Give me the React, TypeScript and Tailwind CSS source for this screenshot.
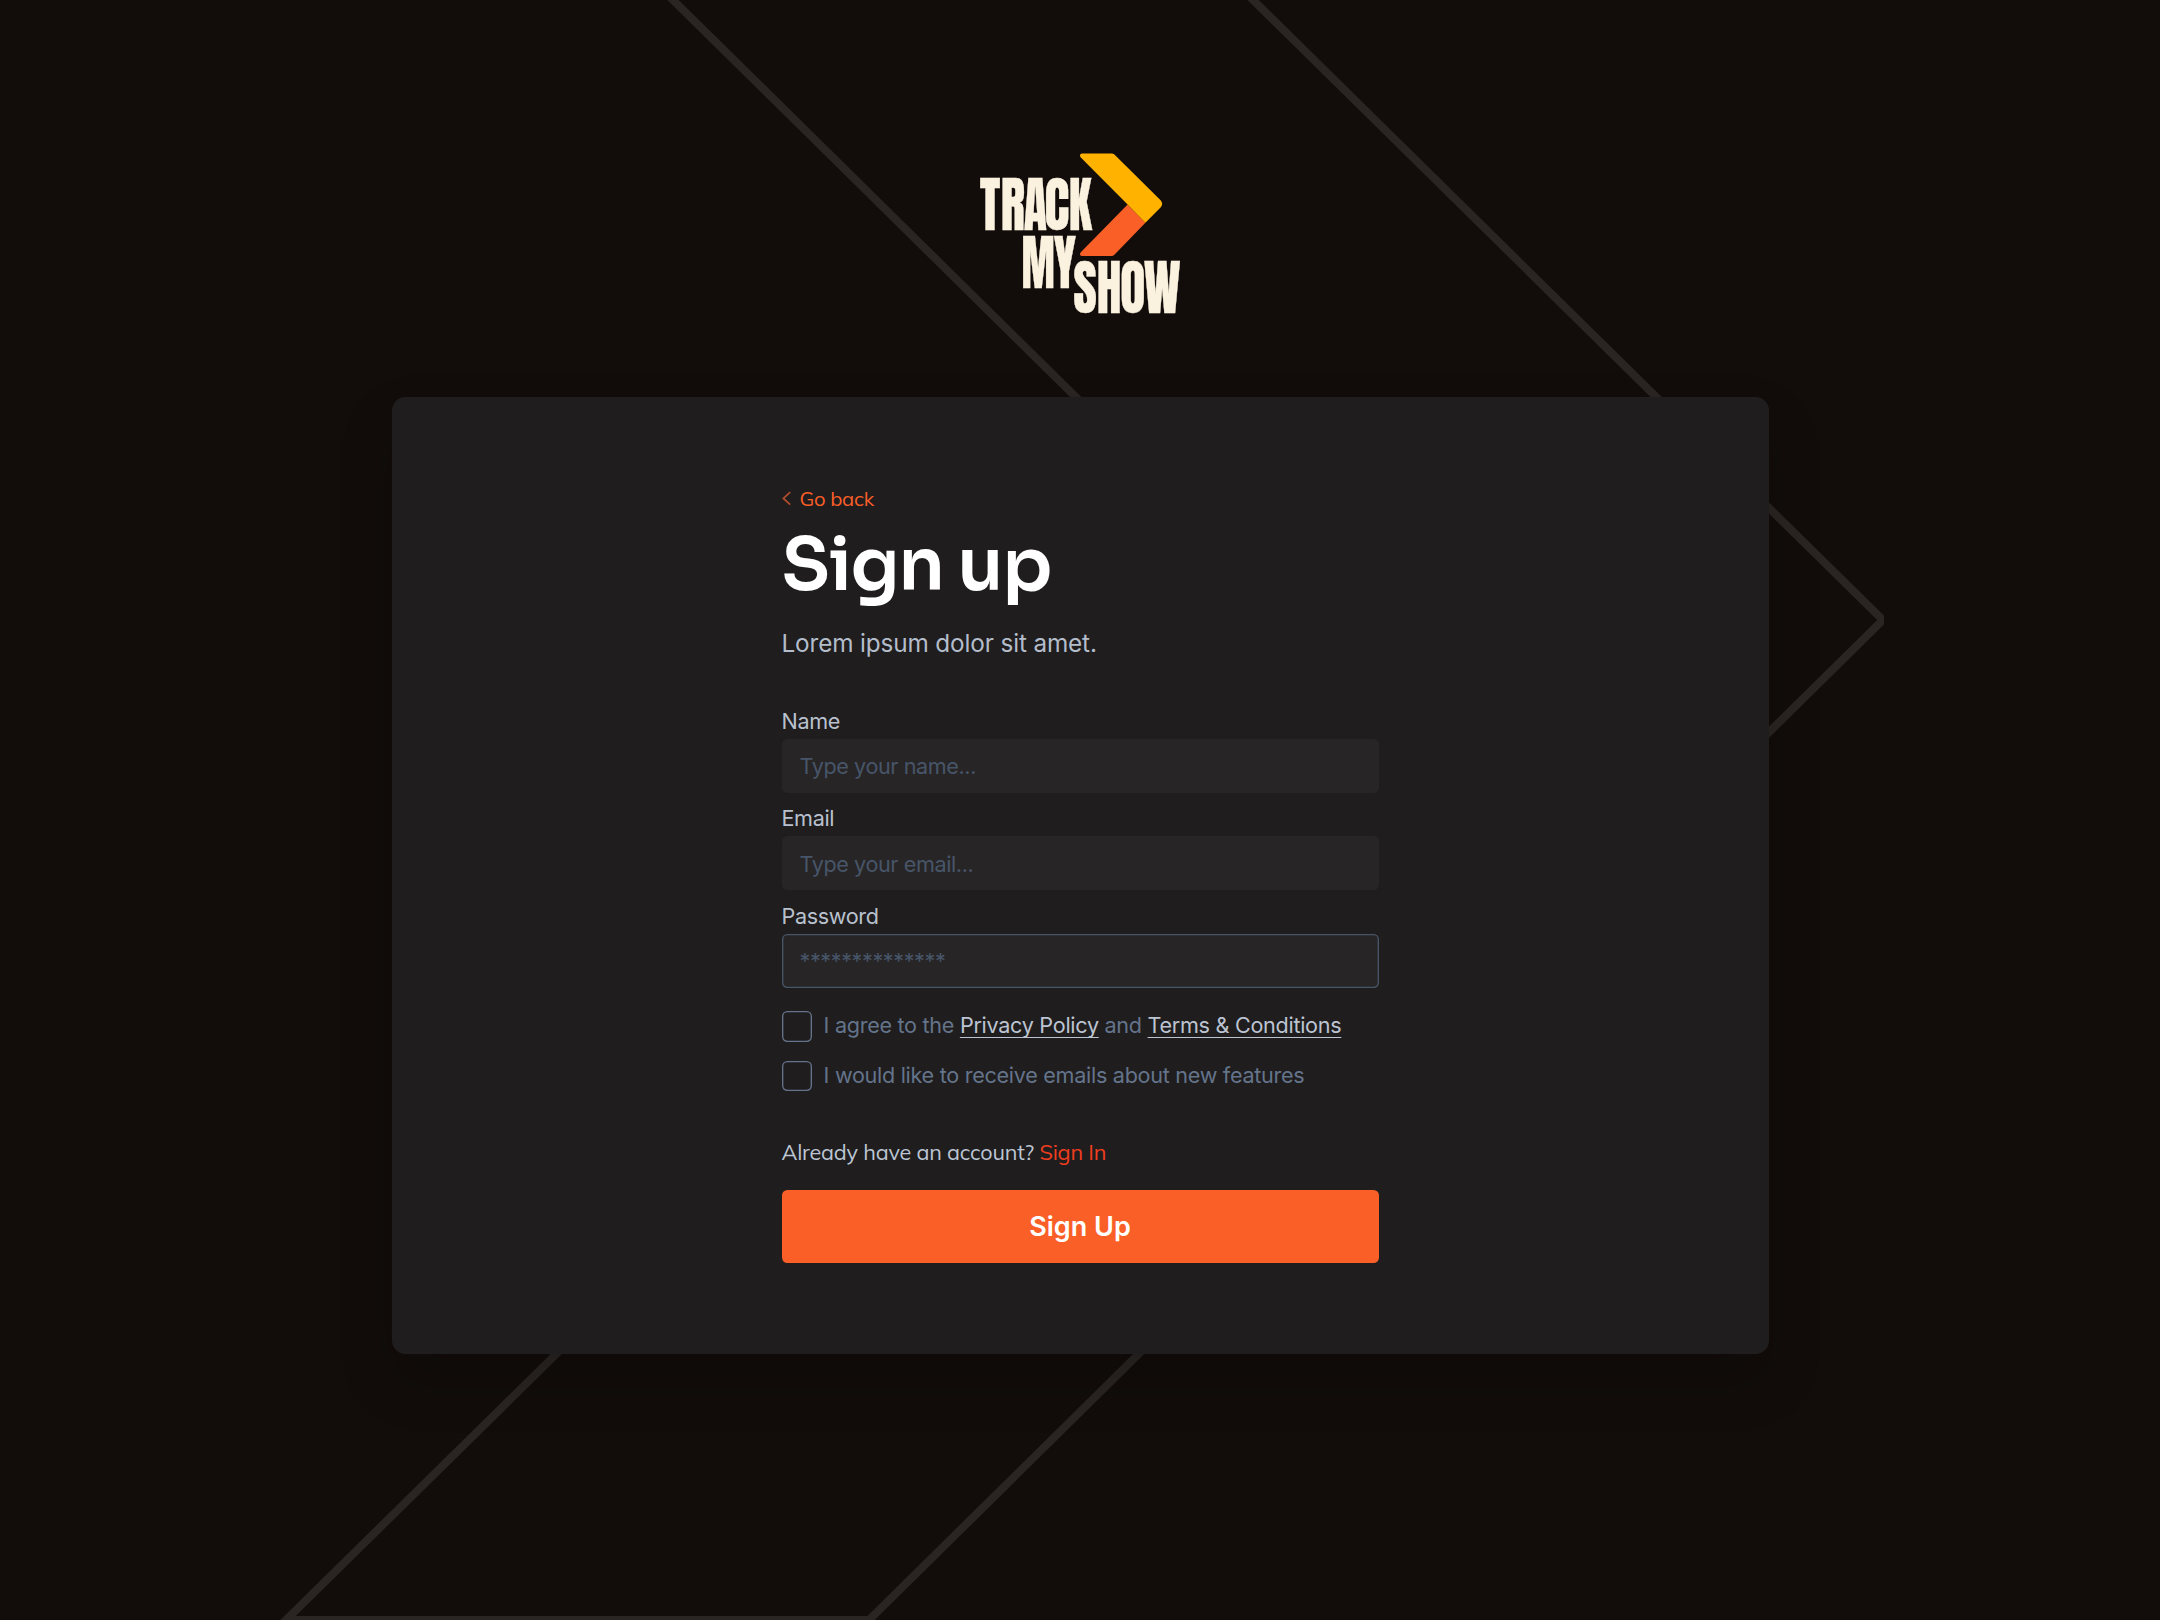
import type { ReactNode } from "react";

type GlyphSpec = { ch: string; x: number; w: number; left: number; ink: number };

const TRACK: GlyphSpec[] = [
  { ch: "T", x: 980, w: 20.2, left: 0.4, ink: 38.8 },
  { ch: "R", x: 1002.2, w: 21.8, left: 3, ink: 43 },
  { ch: "A", x: 1024.2, w: 22.4, left: 1, ink: 47 },
  { ch: "C", x: 1046.1, w: 22.4, left: 3, ink: 43 },
  { ch: "K", x: 1070.3, w: 22.5, left: 3, ink: 46 },
];
const MY: GlyphSpec[] = [
  { ch: "M", x: 1022.9, w: 30.4, left: 3, ink: 68 },
  { ch: "Y", x: 1053.8, w: 22.4, left: 0, ink: 45 },
];
const SHOW: GlyphSpec[] = [
  { ch: "S", x: 1074.3, w: 22, left: 2, ink: 43 },
  { ch: "H", x: 1098.3, w: 21.8, left: 3, ink: 44 },
  { ch: "O", x: 1121.9, w: 22.2, left: 3, ink: 43 },
  { ch: "W", x: 1144.3, w: 35.7, left: 1, ink: 69 },
];

function Word({ glyphs, baseline }: { glyphs: GlyphSpec[]; baseline: number }) {
  return (
    <g fill="#faf1df" stroke="#faf1df" strokeWidth="0.6" fontFamily="Anton, 'Roboto Condensed', sans-serif" fontSize="100">
      {glyphs.map((g) => (
        <text
          key={g.ch}
          x={-g.left}
          y={0}
          transform={`translate(${g.x} ${baseline}) scale(${g.w / g.ink} 0.602)`}
        >
          {g.ch}
        </text>
      ))}
    </g>
  );
}

function Logo() {
  return (
    <svg className="block h-[164px] w-[204px] overflow-visible" viewBox="978 152 204 164" role="img" aria-label="Track My Show">
      <path
        d="M1127.6 204.6 L1145.4 222.7 L1114.4 254.8 Q1113.2 256 1111.6 256 H1081.8 Q1080 256 1080 254.2 Q1080 253 1080.8 252.2 Z"
        fill="#fa5f27"
      />
      <path
        d="M1127.6 204.6 L1080.8 157.4 Q1080 156.6 1080 155.4 Q1080 153.4 1082 153.4 H1111.6 Q1113.2 153.4 1114.4 154.6 L1160.6 200.2 Q1163.6 203.8 1160.8 207.2 L1145.4 222.7 Z"
        fill="#ffb300"
      />
      <Word glyphs={TRACK} baseline={230.3} />
      <Word glyphs={MY} baseline={287.6} />
      <Word glyphs={SHOW} baseline={313.2} />
    </svg>
  );
}

function Backdrop() {
  return (
    <svg
      className="absolute left-0 top-0 h-[1620px] w-[1884px]"
      viewBox="0 0 1884 1620"
      fill="none"
      stroke="#2a2522"
      strokeWidth="8"
      strokeMiterlimit="10"
      aria-hidden="true"
    >
      <path d="M1232.7 -20 L1882.8 620 L869 1620 H286 L1302 620 L652.7 -20 Z" />
    </svg>
  );
}

function Field({
  label,
  placeholder,
  type = "text",
  outlined = false,
}: {
  label: string;
  placeholder: string;
  type?: string;
  outlined?: boolean;
}) {
  return (
    <label className="block">
      <span className="block text-[21.6px] leading-[28px] tracking-[-0.36px] text-[#b9c1ce]">{label}</span>
      <input
        type={type}
        placeholder={placeholder}
        className={
          "mt-[4px] block h-[54px] w-full rounded-[5.4px] bg-[#272526] px-[18px] pt-[1px] text-[21.6px] tracking-[-0.4px] outline-none placeholder:text-[#475569]" +
          (outlined ? " shadow-[inset_0_0_0_1.35px_#475569]" : "")
        }
      />
    </label>
  );
}

function Check({ children }: { children: ReactNode }) {
  return (
    <label className="flex h-[30.6px] items-start gap-[11.5px]">
      <span className="size-[30.6px] shrink-0 rounded-[5.4px] shadow-[inset_0_0_0_1.35px_#64748b]" />
      <span className="whitespace-nowrap text-[21.6px] leading-[28px] tracking-[-0.29px] text-[#64748b]">{children}</span>
    </label>
  );
}

function PolicyLink({ children }: { children: ReactNode }) {
  return (
    <a
      href="#"
      className="text-[#bcc4d1] underline decoration-[1.35px] underline-offset-[4px] [text-decoration-skip-ink:none]"
    >
      {children}
    </a>
  );
}

export default function App() {
  return (
    <div className="relative h-[1620px] w-[2160px] overflow-hidden bg-[#120d0a] font-['Inter',sans-serif]">
      <Backdrop />
      <div className="relative flex flex-col items-center pt-[152px]">
        <Logo />
        <main className="mt-[80.9px] flex h-[957px] w-[1377px] justify-center rounded-[13.5px] bg-[#1f1d1e] pt-[88.6px] shadow-[0_27px_54px_rgba(0,0,0,0.2)]">
          <form className="w-[597px]">
            <a
              href="#"
              className="flex items-center gap-[8px] font-['Mulish',sans-serif] text-[20.25px] leading-[28px] tracking-[-0.3px] text-[#fa5f27]"
            >
              <svg className="-mt-[2px] h-[15px] w-[10px]" viewBox="0 0 10 15" fill="none" stroke="#b04c2b" strokeWidth="1.8" aria-hidden="true">
                <path d="M8.2 1.2 L1.4 7.4 L8.2 13.6" />
              </svg>
              Go back
            </a>
            <h1 className="mt-[16.2px] font-['Sora',sans-serif] text-[72px] leading-[72px] font-semibold tracking-[-0.02em] text-white">
              Sign up
            </h1>
            <p className="mt-[25.1px] text-[24.3px] leading-[32px] tracking-[-0.13px] text-[#b4bdcb]">
              Lorem ipsum dolor sit amet.
            </p>

            <div className="mt-[48.1px] flex flex-col gap-[11.5px]">
              <Field label="Name" placeholder="Type your name..." />
              <Field label="Email" placeholder="Type your email..." />
              <Field label="Password" placeholder="**************" type="password" outlined />
            </div>

            <div className="mt-[23.6px] flex flex-col gap-[18.8px]">
              <Check>
                I agree to the <PolicyLink>Privacy Policy</PolicyLink> and <PolicyLink>Terms &amp; Conditions</PolicyLink>
              </Check>
              <Check>I would like to receive emails about new features</Check>
            </div>

            <p className="mt-[46.4px] font-['Mulish',sans-serif] text-[21.6px] leading-[28px] tracking-[-0.21px] text-[#bcc5d3]">
              Already have an account?{" "}
              <a href="#" className="text-[#f03e1e]">
                Sign In
              </a>
            </p>
            <button
              type="button"
              className="mt-[23.8px] block h-[73.5px] w-full rounded-[5.4px] bg-[#fa5f27] pt-[2px] text-[27px] font-semibold text-white"
            >
              Sign Up
            </button>
          </form>
        </main>
      </div>
    </div>
  );
}
